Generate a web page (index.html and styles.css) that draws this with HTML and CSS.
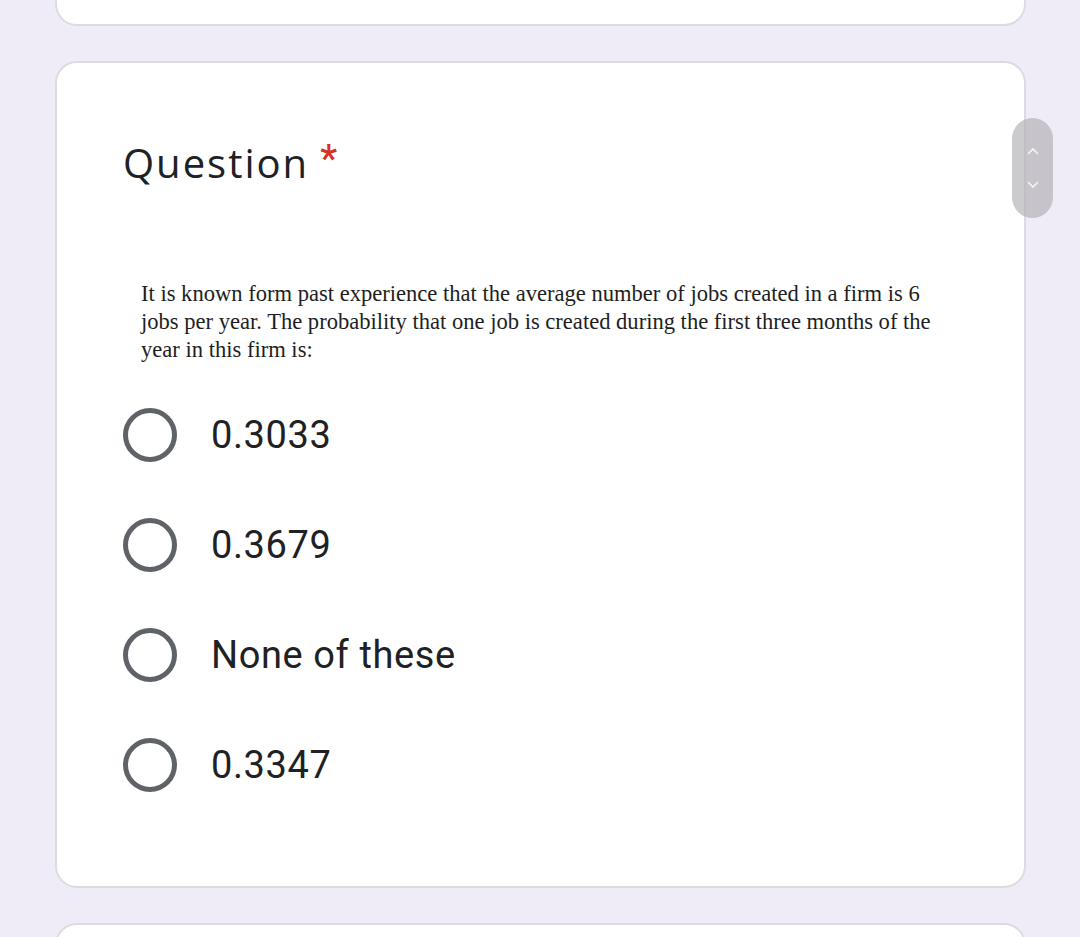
FILE: index.html
```html
<!DOCTYPE html>
<html>
<head>
<meta charset="utf-8">
<link rel="stylesheet" href="styles.css">
</head>
<body>
<div class="page">
  <div class="card card-top"></div>
  <div class="card card-main">
    <div class="title-row">
      <span class="title">Question</span>
      <span class="req">*</span>
    </div>
    <div class="qimg">
      <p>It is known form past experience that the average number of jobs created in a firm is 6<br>jobs per year. The probability that one job is created during the first three months of the<br>year in this firm is:</p>
    </div>
    <div class="options">
      <div class="opt"><span class="radio"></span><span class="label">0.3033</span></div>
      <div class="opt"><span class="radio"></span><span class="label">0.3679</span></div>
      <div class="opt"><span class="radio"></span><span class="label">None of these</span></div>
      <div class="opt"><span class="radio"></span><span class="label">0.3347</span></div>
    </div>
  </div>
  <div class="card card-bottom"></div>
</div>
<div class="scroll-thumb">
  <svg width="14" height="10" viewBox="0 0 14 10"><path d="M2 8 L7 3 L12 8" fill="none" stroke="#f4f4f4" stroke-width="1.6"/></svg>
  <svg width="14" height="10" viewBox="0 0 14 10"><path d="M2 2 L7 7 L12 2" fill="none" stroke="#f4f4f4" stroke-width="1.6"/></svg>
</div>
</body>
</html>
```
FILE: styles.css
```css
html, body {
  margin: 0;
  padding: 0;
  background: #efebf7;
  height: 937px;
  overflow: hidden;
}
.page {
  display: flex;
  flex-direction: column;
  gap: 35px;
  padding-left: 55px;
  width: 971px;
  margin-top: -200px;
}
.card {
  background: #fff;
  border: 2px solid #dadce0;
  border-radius: 22px;
  box-sizing: border-box;
}
.card-top {
  height: 226px;
}
.card-bottom {
  height: 200px;
}
.card-main {
  height: 827px;
  padding: 74px 0 0 66px;
}
.title-row {
  display: flex;
  align-items: flex-start;
  gap: 11px;
  height: 60px;
}
.title {
  font-family: "Open Sans", sans-serif;
  font-size: 40px;
  line-height: 52px;
  color: #202124;
  letter-spacing: 2px;
}
.req {
  font-family: "Roboto", sans-serif;
  font-size: 38px;
  font-weight: 500;
  color: #d93025;
  line-height: 44px;
}
.qimg {
  margin-top: 82px;
  padding-left: 18px;
  width: 820px;
}
.qimg p {
  margin: 0;
  font-family: "Liberation Serif", serif;
  font-size: 24px;
  line-height: 28px;
  color: #1e1e1e;
  white-space: nowrap;
  transform: scaleX(0.94);
  transform-origin: left top;
}
.options {
  margin-top: 45px;
  display: flex;
  flex-direction: column;
  gap: 56px;
}
.opt {
  display: flex;
  align-items: center;
  gap: 34px;
  height: 54px;
}
.radio {
  width: 54px;
  height: 54px;
  border: 5px solid #5f6368;
  border-radius: 50%;
  box-sizing: border-box;
  flex: none;
}
.label {
  font-family: "Roboto", sans-serif;
  font-size: 38px;
  color: #202124;
  letter-spacing: 0.6px;
}
.scroll-thumb {
  position: absolute;
  left: 1012px;
  top: 118px;
  width: 41px;
  height: 100px;
  border-radius: 21px;
  background: rgba(175, 175, 178, 0.65);
  display: flex;
  flex-direction: column;
  align-items: center;
  justify-content: center;
  gap: 24px;
}
```
